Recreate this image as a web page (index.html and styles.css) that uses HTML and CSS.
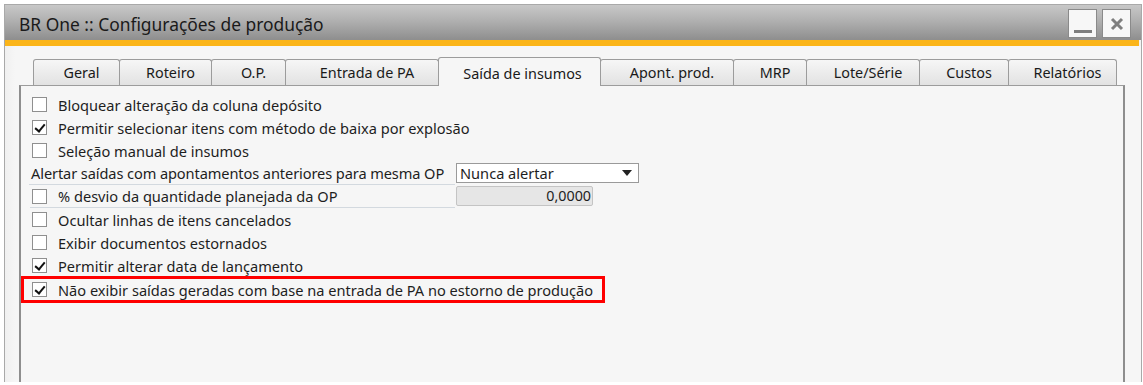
FILE: index.html
```html
<!DOCTYPE html>
<html lang="pt">
<head>
    <meta charset="UTF-8">
    <title>BR One :: Configurações de produção</title>
    <link rel="stylesheet" href="styles.css">
</head>
<body>
    <div class="window">
        <div class="title-bar">
            <span class="title">BR One :: Configurações de produção</span>
            <div class="title-buttons">
                <button class="win-btn minimize"><span></span></button>
                <button class="win-btn close">
                    <svg width="16" height="16" viewBox="0 0 16 16">
                        <path d="M3 3 L13 13 M13 3 L3 13" stroke="#7e7e7e" stroke-width="3" />
                    </svg>
                </button>
            </div>
        </div>
        <div class="accent"></div>

        <div class="content">
            <div class="tabs">
                <div class="tab tab-geral">Geral</div>
                <div class="tab tab-roteiro">Roteiro</div>
                <div class="tab tab-op">O.P.</div>
                <div class="tab tab-entrada">Entrada de PA</div>
                <div class="tab tab-saida active">Saída de insumos</div>
                <div class="tab tab-apont">Apont. prod.</div>
                <div class="tab tab-mrp">MRP</div>
                <div class="tab tab-lote">Lote/Série</div>
                <div class="tab tab-custos">Custos</div>
                <div class="tab tab-rel">Relatórios</div>
            </div>

            <div class="panel">
                <div class="row">
                    <span class="check"></span>
                    <span class="label">Bloquear alteração da coluna depósito</span>
                </div>
                <div class="row">
                    <span class="check checked"></span>
                    <span class="label">Permitir selecionar itens com método de baixa por explosão</span>
                </div>
                <div class="row">
                    <span class="check"></span>
                    <span class="label">Seleção manual de insumos</span>
                </div>
                <div class="row field-row">
                    <span class="field-label plain">Alertar saídas com apontamentos anteriores para mesma OP</span>
                    <div class="select">
                        <span>Nunca alertar</span>
                        <span class="arrow"></span>
                    </div>
                </div>
                <div class="row field-row">
                    <span class="field-label">
                        <span class="check"></span>
                        <span class="label">% desvio da quantidade planejada da OP</span>
                    </span>
                    <div class="number-input">0,0000</div>
                </div>
                <div class="row">
                    <span class="check"></span>
                    <span class="label">Ocultar linhas de itens cancelados</span>
                </div>
                <div class="row">
                    <span class="check"></span>
                    <span class="label">Exibir documentos estornados</span>
                </div>
                <div class="row">
                    <span class="check checked"></span>
                    <span class="label">Permitir alterar data de lançamento</span>
                </div>
                <div class="row highlight">
                    <span class="check checked"></span>
                    <span class="label">Não exibir saídas geradas com base na entrada de PA no estorno de produção</span>
                </div>
            </div>
        </div>
    </div>
</body>
</html>
```

FILE: styles.css
```css
* {
    margin: 0;
    padding: 0;
    box-sizing: border-box;
}

body {
    font-family: "Noto Sans", "Open Sans", Arial, sans-serif;
    background: #ffffff;
    color: #1e1e1e;
    width: 1143px;
    height: 385px;
    overflow: hidden;
}

.window {
    margin: 4px 1px 0 4px;
    height: 378px;
    border: 1px solid #a9a9a9;
    border-bottom: none;
    background: #f2f2f2;
    display: flex;
    flex-direction: column;
}

.title-bar {
    height: 35px;
    background: linear-gradient(to bottom, #c8c8c8 0%, #adadad 50%, #8e8e8e 100%);
    display: flex;
    align-items: center;
    justify-content: space-between;
    padding: 0 10px 0 14px;
}

.title {
    font-size: 17.4px;
    color: #1a1a1a;
    padding-top: 2px;
}

.title-buttons {
    display: flex;
    gap: 5px;
    padding-top: 2px;
}

.win-btn {
    width: 29px;
    height: 29px;
    background: #f7f7f7;
    border: 1px solid #8a8a8a;
    display: flex;
    align-items: center;
    justify-content: center;
}

.minimize span {
    display: block;
    width: 18px;
    height: 3px;
    background: #7e7e7e;
    margin-top: 16px;
}

.accent {
    height: 6px;
    background: #fbb51a;
    margin-right: 2px;
}

.content {
    flex: 1;
    padding: 10px 16px 0 14px;
    display: flex;
    flex-direction: column;
    background: linear-gradient(to right, #f0f0f0 0, #f6f6f6 10px);
}

.tabs {
    display: flex;
    align-items: flex-end;
    height: 29px;
    margin-left: 14px;
    position: relative;
    z-index: 1;
}

.tab {
    height: 26px;
    border: 1px solid #9c9c9c;
    border-bottom: none;
    border-radius: 3px 3px 0 0;
    background: linear-gradient(to bottom, #f6f6f6 0%, #e2e2e2 100%);
    font-size: 14.4px;
    color: #1a1a1a;
    display: flex;
    align-items: center;
    justify-content: center;
    padding-left: 10px;
    margin-right: -1px;
    white-space: nowrap;
}

.tab.active {
    height: 29px;
    background: #f6f6f6;
    padding-top: 3px;
    margin-bottom: -1px;
    padding-left: 6px;
}

.tab-geral { width: 87px; }
.tab-roteiro { width: 93px; }
.tab-op { width: 75px; }
.tab-entrada { width: 154px; }
.tab-saida { width: 163px; }
.tab-apont { width: 134px; }
.tab-mrp { width: 74px; }
.tab-lote { width: 114px; }
.tab-custos { width: 90px; }
.tab-rel { width: 109px; }

.panel {
    flex: 1;
    background: #f6f6f6;
    border-top: 1px solid #9c9c9c;
    border-left: 2px solid #8e8e8e;
    border-right: 2px solid #8e8e8e;
    padding: 7px 0 0 11px;
    display: flex;
    flex-direction: column;
    align-items: flex-start;
}

.row {
    height: 23px;
    display: flex;
    align-items: center;
    font-size: 14.6px;
    color: #1e1e1e;
    white-space: nowrap;
}

.check {
    width: 15px;
    height: 15px;
    border: 1px solid #8f8f8f;
    background: #ffffff;
    margin-right: 11px;
    flex-shrink: 0;
    position: relative;
}

.check.checked::after {
    content: "";
    position: absolute;
    left: 4px;
    top: 1px;
    width: 4px;
    height: 8px;
    border: solid #111;
    border-width: 0 2px 2px 0;
    transform: rotate(40deg);
}

.field-row {
    align-items: stretch;
}

.field-label {
    width: 425px;
    display: flex;
    align-items: center;
    border-bottom: 1px solid #d3d9df;
    margin-left: -2px;
    padding-left: 2px;
}

.field-label.plain {
    margin-left: -3px;
    padding-left: 2px;
    width: 426px;
    letter-spacing: -0.1px;
}

.select {
    width: 183px;
    height: 20px;
    margin-top: 1px;
    margin-left: 1px;
    border: 1px solid #9a9a9a;
    background: #ffffff;
    display: flex;
    align-items: center;
    justify-content: space-between;
    padding: 0 6px 0 3px;
}

.arrow {
    width: 0;
    height: 0;
    border-left: 5px solid transparent;
    border-right: 5px solid transparent;
    border-top: 6px solid #222;
}

.number-input {
    width: 137px;
    height: 20px;
    margin-top: 1px;
    margin-left: 1px;
    border: 1px solid #c4c4c4;
    border-radius: 2px;
    background: #e6e6e6;
    text-align: right;
    padding-right: 1px;
    line-height: 18px;
    font-size: 14.3px;
}

.row.highlight {
    height: 21px;
    margin-top: 2px;
    margin-left: -8px;
    padding: 0 9px 0 8px;
    outline: 3px solid #ff0000;
}
```
